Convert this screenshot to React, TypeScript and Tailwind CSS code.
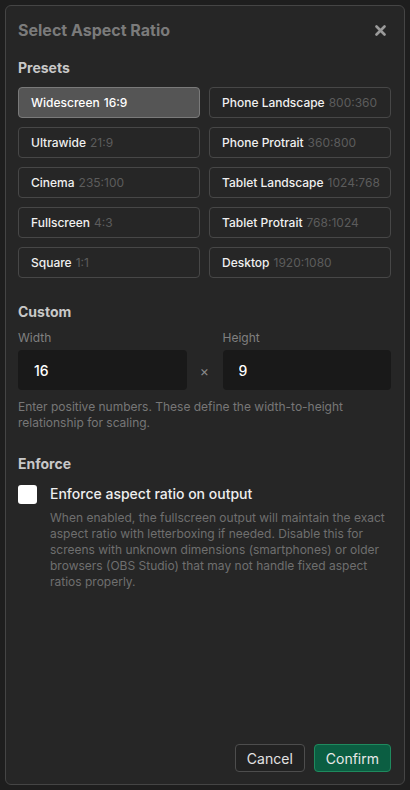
import React, { useState } from 'react';

const PRESETS = [
  { name: 'Widescreen', ratio: '16:9' },
  { name: 'Phone Landscape', ratio: '800:360' },
  { name: 'Ultrawide', ratio: '21:9' },
  { name: 'Phone Protrait', ratio: '360:800' },
  { name: 'Cinema', ratio: '235:100' },
  { name: 'Tablet Landscape', ratio: '1024:768' },
  { name: 'Fullscreen', ratio: '4:3' },
  { name: 'Tablet Protrait', ratio: '768:1024' },
  { name: 'Square', ratio: '1:1' },
  { name: 'Desktop', ratio: '1920:1080' },
];

export default function App() {
  const [selected, setSelected] = useState(0);
  const [width, setWidth] = useState('16');
  const [height, setHeight] = useState('9');
  const [enforce, setEnforce] = useState(false);

  return (
    <div
      className="h-[790px] w-[410px] bg-[#1e1e1e] p-[5px]"
      style={{ fontFamily: 'Inter, "Noto Sans", sans-serif' }}
    >
      <div className="flex h-full flex-col rounded-md border border-[#454545] bg-[#262626] px-3 pt-3 pb-3">
        {/* Header */}
        <div className="flex h-6 items-center justify-between">
          <h2 className="text-[16px] font-bold text-[#7b7b7b]">Select Aspect Ratio</h2>
          <button className="mr-[6px] text-[#9a9a9a]" aria-label="Close">
            <svg width="11" height="11" viewBox="0 0 11 11" fill="none">
              <path d="M1.5 1.5l8 8M9.5 1.5l-8 8" stroke="currentColor" strokeWidth="2.6" strokeLinecap="round" />
            </svg>
          </button>
        </div>

        {/* Presets */}
        <div className="mt-4 text-[14px] leading-5 font-bold text-[#c8c8c8]">Presets</div>
        <div className="mt-[9px] mr-px grid grid-cols-2 gap-x-[9px] gap-y-[9px]">
          {PRESETS.map((p, i) => (
            <button
              key={p.name}
              onClick={() => setSelected(i)}
              className={`flex h-[31px] items-center whitespace-nowrap rounded-[4px] border px-[12px] text-left text-[12px] ${
                selected === i
                  ? 'border-[#7a7a7a] bg-[#555555] text-white'
                  : 'border-[#474747] bg-transparent text-[#f0f0f0]'
              }`}
            >
              <span className="font-medium">{p.name}</span>
              {selected === i ? (
                <span className="ml-1 font-medium">{p.ratio}</span>
              ) : (
                <span className="ml-1 text-[#5c5c5c]">{p.ratio}</span>
              )}
            </button>
          ))}
        </div>

        {/* Custom */}
        <div className="mt-6 text-[14px] leading-5 font-bold text-[#c8c8c8]">Custom</div>
        <div className="mt-[7px] mr-px flex items-end">
          <label className="flex flex-1 flex-col">
            <span className="text-[12px] leading-[18px] text-[#808080]">Width</span>
            <input
              value={width}
              onChange={(e) => setWidth(e.target.value)}
              className="mt-[3px] h-10 w-full rounded-[4px] bg-[#191919] pl-4 text-[14px] font-medium text-white outline-none"
            />
          </label>
          <span className="flex h-10 w-9 items-center justify-center text-[14px] text-[#8a8a8a]">×</span>
          <label className="flex flex-1 flex-col">
            <span className="text-[12px] leading-[18px] text-[#808080]">Height</span>
            <input
              value={height}
              onChange={(e) => setHeight(e.target.value)}
              className="mt-[3px] h-10 w-full rounded-[4px] bg-[#191919] pl-4 text-[14px] font-medium text-white outline-none"
            />
          </label>
        </div>
        <p className="mt-[9px] text-[12px] leading-4 text-[#777777]">
          Enter positive numbers. These define the width-to-height relationship for scaling.
        </p>

        {/* Enforce */}
        <div className="mt-[23px] text-[14px] leading-5 font-bold text-[#c8c8c8]">Enforce</div>
        <label className="mt-[10px] flex cursor-pointer items-center gap-[13px]">
          <input
            type="checkbox"
            checked={enforce}
            onChange={(e) => setEnforce(e.target.checked)}
            className="h-[19px] w-[19px] appearance-none rounded-[3px] bg-white"
          />
          <span className="text-[14px] leading-5 font-medium text-[#eeeeee]">Enforce aspect ratio on output</span>
        </label>
        <p className="mt-[6px] pl-8 pr-1 text-[12px] leading-4 text-[#6f6f6f]">
          When enabled, the fullscreen output will maintain the exact aspect ratio with letterboxing if needed. Disable
          this for screens with unknown dimensions (smartphones) or older browsers (OBS Studio) that may not handle fixed
          aspect ratios properly.
        </p>

        {/* Footer */}
        <div className="mt-auto mr-px flex justify-end gap-[9px]">
          <button className="h-7 rounded-[4px] border border-[#4d4d4d] bg-[#222222] px-[11px] text-[14px] text-[#e2e2e2]">
            Cancel
          </button>
          <button className="h-7 rounded-[4px] border border-[#1f8a5e] bg-[#0b5e42] px-[11px] text-[14px] text-[#e8e8e8]">
            Confirm
          </button>
        </div>
      </div>
    </div>
  );
}
